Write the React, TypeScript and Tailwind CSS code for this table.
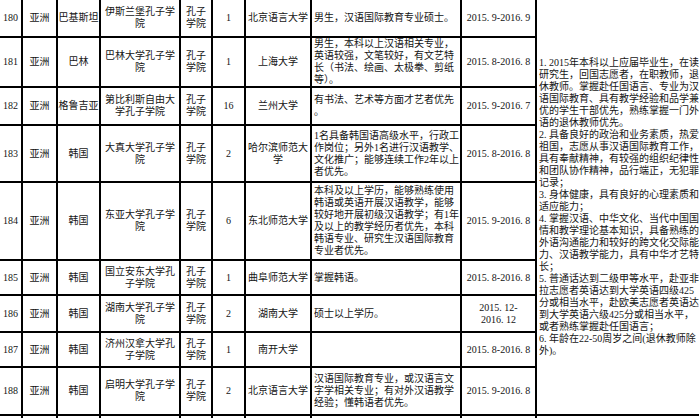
import React from "react";

type Row = {
  no: string;
  area: string;
  country: string[];
  inst: string[];
  type: string[];
  count: string;
  univ: string[];
  desc: string[];
  date: string[];
};

const rows: Row[] = [
  { no: "180", area: "亚洲", country: ["巴基斯坦"], inst: ["伊斯兰堡孔子学", "院"], type: ["孔子", "学院"], count: "1", univ: ["北京语言大学"], desc: ["男生，汉语国际教育专业硕士。"], date: ["2015. 9-2016. 9"] },
  { no: "181", area: "亚洲", country: ["巴林"], inst: ["巴林大学孔子学", "院"], type: ["孔子", "学院"], count: "1", univ: ["上海大学"], desc: ["男生，本科以上汉语相关专业，", "英语较强，文笔较好，有文艺特", "长（书法、绘画、太极拳、剪纸", "等）。"], date: ["2015. 8-2016. 8"] },
  { no: "182", area: "亚洲", country: ["格鲁吉亚"], inst: ["第比利斯自由大", "学孔子学院"], type: ["孔子", "学院"], count: "16", univ: ["兰州大学"], desc: ["有书法、艺术等方面才艺者优先", "。"], date: ["2015. 9-2016. 7"] },
  { no: "183", area: "亚洲", country: ["韩国"], inst: ["大真大学孔子学", "院"], type: ["孔子", "学院"], count: "2", univ: ["哈尔滨师范大", "学"], desc: ["1名具备韩国语高级水平，行政工", "作岗位；另外1名进行汉语教学、", "文化推广；能够连续工作2年以上", "者优先。"], date: ["2015. 8-2016. 8"] },
  { no: "184", area: "亚洲", country: ["韩国"], inst: ["东亚大学孔子学", "院"], type: ["孔子", "学院"], count: "6", univ: ["东北师范大学"], desc: ["本科及以上学历，能够熟练使用", "韩语或英语开展汉语教学，能够", "较好地开展初级汉语教学；有1年", "及以上的教学经历者优先，本科", "韩语专业、研究生汉语国际教育", "专业者优先。"], date: ["2015. 9-2016. 8"] },
  { no: "185", area: "亚洲", country: ["韩国"], inst: ["国立安东大学孔", "子学院"], type: ["孔子", "学院"], count: "1", univ: ["曲阜师范大学"], desc: ["掌握韩语。"], date: ["2015. 8-2016. 8"] },
  { no: "186", area: "亚洲", country: ["韩国"], inst: ["湖南大学孔子学", "院"], type: ["孔子", "学院"], count: "2", univ: ["湖南大学"], desc: ["硕士以上学历。"], date: ["2015. 12-", "2016. 12"] },
  { no: "187", area: "亚洲", country: ["韩国"], inst: ["济州汉拿大学孔", "子学院"], type: ["孔子", "学院"], count: "1", univ: ["南开大学"], desc: [], date: ["2015. 8-2016. 8"] },
  { no: "188", area: "亚洲", country: ["韩国"], inst: ["启明大学孔子学", "院"], type: ["孔子", "学院"], count: "2", univ: ["北京语言大学"], desc: ["汉语国际教育专业，或汉语言文", "字学相关专业；有对外汉语教学", "经验；懂韩语者优先。"], date: ["2015. 9-2016. 8"] },
];

const req = [
  "1. 2015年本科以上应届毕业生，在读",
  "研究生，回国志愿者，在职教师，退",
  "休教师。掌握赴任国语言、专业为汉",
  "语国际教育、具有教学经验和品学兼",
  "优的学生干部优先，熟练掌握一门外",
  "语的退休教师优先。",
  "2. 具备良好的政治和业务素质，热爱",
  "祖国，志愿从事汉语国际教育工作，",
  "具有奉献精神，有较强的组织纪律性",
  "和团队协作精神，品行端正，无犯罪",
  "记录；",
  "3. 身体健康，具有良好的心理素质和",
  "适应能力；",
  "4. 掌握汉语、中华文化、当代中国国",
  "情和教学理论基本知识，具备熟练的",
  "外语沟通能力和较好的跨文化交际能",
  "力、汉语教学能力，具有中华才艺特",
  "长；",
  "5. 普通话达到二级甲等水平，赴亚非",
  "拉志愿者英语达到大学英语四级425",
  "分或相当水平，赴欧美志愿者英语达",
  "到大学英语六级425分或相当水平，",
  "或者熟练掌握赴任国语言；",
  "6. 年龄在22-50周岁之间(退休教师除",
  "外)。",
];

function Lines({ lines }: { lines: string[] }) {
  return (
    <div>
      {lines.map((l, i) => (
        <div key={i} className="whitespace-nowrap">
          {l}
        </div>
      ))}
    </div>
  );
}

function C({ lines }: { lines: string[] }) {
  return (
    <div className="bg-white flex items-center justify-center text-center overflow-hidden">
      <Lines lines={lines} />
    </div>
  );
}

function L({ lines }: { lines: string[] }) {
  return (
    <div className="bg-white flex items-center justify-start text-left pl-[2px] overflow-hidden">
      <Lines lines={lines} />
    </div>
  );
}

export default function App() {
  return (
    <div className="w-[699px] h-[418px] overflow-hidden bg-white text-[#141414] text-[10px] leading-[12px] font-['Liberation_Serif','Noto_Sans_CJK_SC',serif]">
      <div className="-ml-[2px] -mt-[2px] w-max grid grid-cols-[21px_33px_41px_78px_30px_31px_64px_148px_73px_170px] grid-rows-[36px_48px_36px_55px_76px_33px_35px_33px_46px_30px] gap-[2px] p-[2px] bg-black">
        <div className="col-start-10 row-start-1 row-span-9 bg-white flex items-center pl-[2px] overflow-hidden">
          <Lines lines={req} />
        </div>
        {rows.map((r) => (
          <React.Fragment key={r.no}>
            <C lines={[r.no]} />
            <C lines={[r.area]} />
            <C lines={r.country} />
            <C lines={r.inst} />
            <C lines={r.type} />
            <C lines={[r.count]} />
            <C lines={r.univ} />
            <L lines={r.desc} />
            <div className="bg-white flex items-center justify-center text-center overflow-hidden">
              <Lines lines={r.date} />
            </div>
          </React.Fragment>
        ))}
        {Array.from({ length: 10 }).map((_, i) => (
          <div key={"e" + i} className="bg-white" />
        ))}
      </div>
    </div>
  );
}
